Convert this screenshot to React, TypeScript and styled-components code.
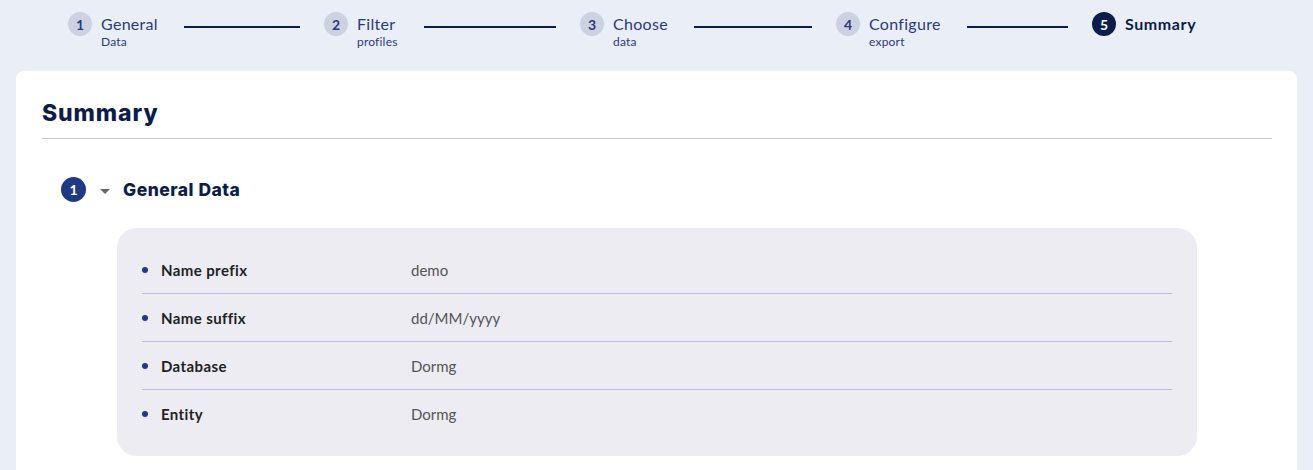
import React from "react";
import styled, { createGlobalStyle } from "styled-components";

const GlobalStyle = createGlobalStyle`
    html, body {
        margin: 0;
        padding: 0;
        background: #eaeef7;
        font-family: "Lato", "Noto Sans", sans-serif;
    }
`;

const Page = styled.div`
    min-height: 470px;
    padding: 0 16px;
`;

const Stepper = styled.div`
    display: flex;
    align-items: flex-start;
    padding: 12px 0 0 52px;
    height: 59px;
    box-sizing: border-box;
`;

const Step = styled.div<{ $last?: boolean }>`
    display: flex;
    align-items: flex-start;
    width: ${(p) => (p.$last ? "auto" : "256px")};
    flex-shrink: 0;
`;

const StepCircle = styled.div<{ $active?: boolean }>`
    width: 24px;
    height: 24px;
    border-radius: 50%;
    background: ${(p) => (p.$active ? "#0c1d4c" : "#cdd2e2")};
    color: ${(p) => (p.$active ? "#fff" : "#2a3a7e")};
    font-size: 14px;
    font-weight: 700;
    display: flex;
    align-items: center;
    justify-content: center;
    flex-shrink: 0;
`;

const StepText = styled.div`
    margin-left: 9px;
    display: flex;
    flex-direction: column;
`;

const StepTitle = styled.span<{ $active?: boolean }>`
    font-size: 16px;
    line-height: 23px;
    letter-spacing: ${(p) => (p.$active ? "0.6px" : "0.3px")};
    color: ${(p) => (p.$active ? "#0c1d4c" : "#2a3a80")};
    font-weight: ${(p) => (p.$active ? 700 : 400)};
`;

const StepSub = styled.span`
    font-size: 12px;
    line-height: 13px;
    letter-spacing: 0.2px;
    color: #2a3a80;
`;

const StepLine = styled.div`
    flex: 1;
    height: 1.5px;
    background: #0c1d4c;
    margin: 14px 24px 0 26px;
`;

const Card = styled.div`
    background: #fff;
    border-radius: 8px 8px 0 0;
    margin-top: 12px;
    padding: 27px 25px 30px 26px;
    min-height: 399px;
    box-sizing: border-box;
`;

const Title = styled.h1`
    margin: 0;
    font-family: "Inter", "Noto Sans", sans-serif;
    font-size: 23px;
    font-weight: 800;
    line-height: 30px;
    color: #0c1d4c;
    letter-spacing: 0.9px;
    padding-bottom: 10px;
    border-bottom: 1px solid #cccccc;
`;

const SectionHeader = styled.div`
    display: flex;
    align-items: center;
    margin: 38px 0 0 19px;
`;

const SectionNumber = styled.div`
    width: 25px;
    height: 25px;
    border-radius: 50%;
    background: #1e3a86;
    color: #fff;
    font-size: 14px;
    font-weight: 700;
    display: flex;
    align-items: center;
    justify-content: center;
`;

const Caret = styled.div`
    width: 0;
    height: 0;
    margin-left: 14px;
    border-left: 5px solid transparent;
    border-right: 5px solid transparent;
    border-top: 5px solid #666;
    margin-top: 3px;
`;

const SectionTitle = styled.span`
    margin-left: 13px;
    font-family: "Inter", "Noto Sans", sans-serif;
    font-size: 17.5px;
    font-weight: 800;
    letter-spacing: 0.5px;
    color: #0c1d4c;
`;

const Panel = styled.div`
    margin: 26px 0 0 75px;
    width: 1080px;
    background: #ececf2;
    border-radius: 20px;
    padding: 18px 25px 19px;
    box-sizing: border-box;
`;

const Row = styled.div`
    display: flex;
    align-items: center;
    height: 47px;
    border-bottom: 1px solid #b7bcde;
    &:last-child {
        border-bottom: none;
    }
`;

const Bullet = styled.span`
    width: 6px;
    height: 6px;
    border-radius: 50%;
    background: #23388a;
    flex-shrink: 0;
`;

const Label = styled.span`
    margin-left: 13px;
    width: 250px;
    font-size: 15px;
    font-weight: 700;
    letter-spacing: 0.4px;
    color: #222;
`;

const Value = styled.span`
    font-size: 15px;
    color: #555;
`;

const steps = [
    { n: 1, title: "General", sub: "Data" },
    { n: 2, title: "Filter", sub: "profiles" },
    { n: 3, title: "Choose", sub: "data" },
    { n: 4, title: "Configure", sub: "export" },
    { n: 5, title: "Summary", active: true },
];

const rows = [
    ["Name prefix", "demo"],
    ["Name suffix", "dd/MM/yyyy"],
    ["Database", "Dormg"],
    ["Entity", "Dormg"],
];

const App = () => (
    <Page>
        <GlobalStyle />
        <Stepper>
            {steps.map((s, i) => {
                const last = i === steps.length - 1;
                return (
                    <Step key={s.n} $last={last}>
                        <StepCircle $active={s.active}>{s.n}</StepCircle>
                        <StepText>
                            <StepTitle $active={s.active}>{s.title}</StepTitle>
                            {s.sub && <StepSub>{s.sub}</StepSub>}
                        </StepText>
                        {!last && <StepLine />}
                    </Step>
                );
            })}
        </Stepper>
        <Card>
            <Title>Summary</Title>
            <SectionHeader>
                <SectionNumber>1</SectionNumber>
                <Caret />
                <SectionTitle>General Data</SectionTitle>
            </SectionHeader>
            <Panel>
                {rows.map(([label, value]) => (
                    <Row key={label}>
                        <Bullet />
                        <Label>{label}</Label>
                        <Value>{value}</Value>
                    </Row>
                ))}
            </Panel>
        </Card>
    </Page>
);

export default App;
